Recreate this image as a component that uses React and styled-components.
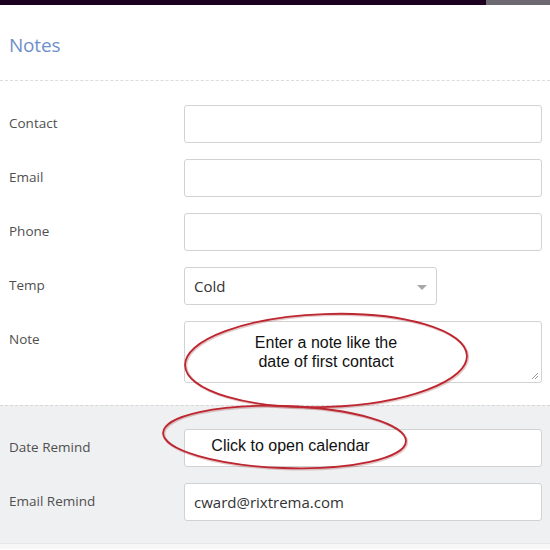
import React from "react";
import styled, { createGlobalStyle } from "styled-components";

const Global = createGlobalStyle`
  html, body { margin: 0; padding: 0; background: #ffffff; }
  body { font-family: "Open Sans", "Noto Sans", sans-serif; }
  * { box-sizing: border-box; }
`;

const Page = styled.div`
  width: 550px;
  height: 550px;
  overflow: hidden;
  position: relative;
  background: #ffffff;
`;

const TopBar = styled.div`
  display: flex;
  height: 5px;
`;

const TopSegment = styled.div`
  background: ${(p) => p.$color};
  ${(p) => (p.$width ? `width: ${p.$width}px;` : "flex: 1;")}
`;

const Header = styled.div`
  height: 76px;
  padding: 27px 9px 0;
  border-bottom: 1px dashed #dcdcdc;
`;

const Title = styled.h2`
  margin: 0;
  font-weight: 400;
  font-size: 19px;
  line-height: 26px;
  color: #6f8fcb;
  letter-spacing: -0.2px;
`;

const Section = styled.div`
  display: flex;
  flex-direction: column;
  gap: 16px;
  padding: ${(p) => p.$pad};
  background: ${(p) => p.$bg || "#ffffff"};
  border-top: ${(p) => (p.$dashed ? "1px dashed #d6d6d6" : "none")};
`;

const Row = styled.div`
  display: flex;
  align-items: flex-start;
  padding: 0 8px 0 9px;
`;

const Label = styled.div`
  width: 175px;
  flex-shrink: 0;
  font-size: 13.5px;
  line-height: 36px;
  color: #4f4f4f;
`;

const Input = styled.div`
  flex: ${(p) => (p.$width ? "none" : "1")};
  width: ${(p) => (p.$width ? `${p.$width}px` : "auto")};
  height: ${(p) => p.$height || 38}px;
  background: #ffffff;
  border: 1px solid #d2d2d2;
  border-radius: 3px;
  display: flex;
  align-items: center;
  padding: 0 9px;
  font-size: 15px;
  color: #333333;
  position: relative;
`;

const Caret = styled.span`
  position: absolute;
  right: 9px;
  top: 17px;
  width: 0;
  height: 0;
  border-left: 5px solid transparent;
  border-right: 5px solid transparent;
  border-top: 5px solid #a8a8a8;
`;

const Grip = styled.svg`
  position: absolute;
  right: 2px;
  bottom: 2px;
`;

const Bottom = styled.div`
  height: 6px;
  background: #f7f7f8;
  border-top: 1px solid #e6e6e8;
`;

const Callout = styled.div`
  position: absolute;
  left: ${(p) => p.$x}px;
  top: ${(p) => p.$y}px;
  width: ${(p) => p.$w}px;
  height: ${(p) => p.$h}px;
`;

const Ring = styled.svg`
  position: absolute;
  inset: 0;
  overflow: visible;
`;

const CalloutText = styled.div`
  position: absolute;
  left: ${(p) => p.$dx || 0}px;
  right: 0;
  top: ${(p) => p.$top}px;
  text-align: center;
  font-family: "Liberation Sans", Arial, sans-serif;
  font-size: 16px;
  line-height: 19px;
  color: #111111;
`;

function Annotation({ x, y, w, h, rot, textTop, dx, children }) {
  return (
    <Callout $x={x} $y={y} $w={w} $h={h}>
      <Ring width={w} height={h} viewBox={`0 0 ${w} ${h}`}>
        <ellipse
          cx={w / 2 + 1}
          cy={h / 2 + 1}
          rx={w / 2 - 1}
          ry={h / 2 - 1}
          fill="none"
          stroke="rgba(150,40,40,0.25)"
          strokeWidth="2.5"
          transform={`rotate(${rot} ${w / 2} ${h / 2})`}
        />
        <ellipse
          cx={w / 2}
          cy={h / 2}
          rx={w / 2 - 1}
          ry={h / 2 - 1}
          fill="none"
          stroke="#bd2630"
          strokeWidth="1.8"
          transform={`rotate(${rot} ${w / 2} ${h / 2})`}
        />
      </Ring>
      <CalloutText $top={textTop} $dx={dx}>{children}</CalloutText>
    </Callout>
  );
}

export default function App() {
  return (
    <Page>
      <Global />
      <TopBar>
        <TopSegment $color="#1c0020" />
        <TopSegment $color="#6c6a70" $width={64} />
      </TopBar>
      <Header>
        <Title>Notes</Title>
      </Header>
      <Section $pad="24px 0 22px">
        <Row>
          <Label>Contact</Label>
          <Input />
        </Row>
        <Row>
          <Label>Email</Label>
          <Input />
        </Row>
        <Row>
          <Label>Phone</Label>
          <Input />
        </Row>
        <Row>
          <Label>Temp</Label>
          <Input $width={253}>
            Cold
            <Caret />
          </Input>
        </Row>
        <Row>
          <Label>Note</Label>
          <Input $height={62}>
            <Grip width="9" height="9" viewBox="0 0 9 9">
              <path d="M8 2 L2 8 M8 5 L5 8" stroke="#9a9a9a" strokeWidth="1" />
            </Grip>
          </Input>
        </Row>
      </Section>
      <Section $pad="23px 0 22px" $bg="#eff0f2" $dashed>
        <Row>
          <Label>Date Remind</Label>
          <Input />
        </Row>
        <Row>
          <Label>Email Remind</Label>
          <Input>cward@rixtrema.com</Input>
        </Row>
      </Section>
      <Bottom />
      <Annotation x={184} y={313} w={284} h={95} rot={-2} textTop={20}>
        Enter a note like the
        <br />
        date of first contact
      </Annotation>
      <Annotation x={162} y={405} w={245} h={64} rot={2} textTop={31} dx={12}>
        Click to open calendar
      </Annotation>
    </Page>
  );
}
